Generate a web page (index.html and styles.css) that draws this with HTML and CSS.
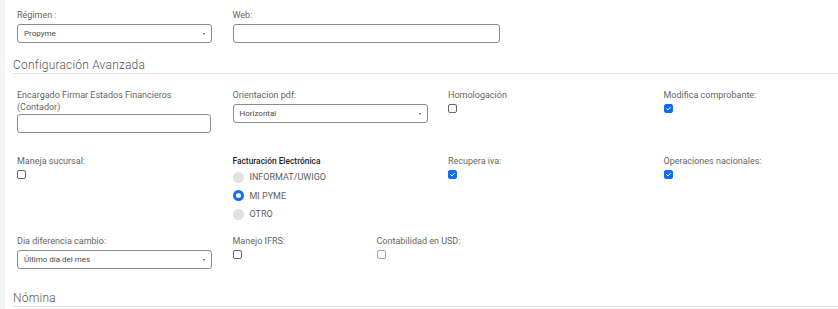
FILE: index.html
```html
<!DOCTYPE html>
<html lang="es">
<head>
    <meta charset="UTF-8">
    <meta name="viewport" content="width=device-width, initial-scale=1.0">
    <title>Configuración Empresa</title>
    <link rel="stylesheet" href="styles.css">
</head>
<body>
    <div class="content">
        <div class="row row-first">
            <div class="field">
                <label class="label">Régimen :</label>
                <div class="select">Propyme<span class="caret"></span></div>
            </div>
            <div class="field field-web">
                <label class="label">Web:</label>
                <input class="input" type="text">
            </div>
        </div>

        <div class="section-title">Configuración Avanzada</div>

        <div class="row row-2">
            <div class="field">
                <label class="label">Encargado Firmar Estados Financieros<br>(Contador)</label>
                <input class="input input-tight" type="text">
            </div>
            <div class="field">
                <label class="label">Orientacion pdf:</label>
                <div class="select">Horizontal<span class="caret"></span></div>
            </div>
            <div class="field">
                <label class="label">Homologación</label>
                <span class="check"></span>
            </div>
            <div class="field">
                <label class="label">Modifica comprobante:</label>
                <span class="check checked"><svg viewBox="0 0 10 10"><path d="M2.3 5.2 L4.2 7 L7.8 3.2" fill="none" stroke="#fff" stroke-width="1.4" stroke-linecap="round" stroke-linejoin="round"/></svg></span>
            </div>
        </div>

        <div class="row row-3">
            <div class="field">
                <label class="label">Maneja sucursal:</label>
                <span class="check"></span>
            </div>
            <div class="field">
                <div class="group-title">Facturación Electrónica</div>
                <div class="radio-item"><span class="radio"></span>INFORMAT/UWIGO</div>
                <div class="radio-item"><span class="radio selected"></span>MI PYME</div>
                <div class="radio-item"><span class="radio"></span>OTRO</div>
            </div>
            <div class="field">
                <label class="label">Recupera iva:</label>
                <span class="check checked"><svg viewBox="0 0 10 10"><path d="M2.3 5.2 L4.2 7 L7.8 3.2" fill="none" stroke="#fff" stroke-width="1.4" stroke-linecap="round" stroke-linejoin="round"/></svg></span>
            </div>
            <div class="field">
                <label class="label">Operaciones nacionales:</label>
                <span class="check checked"><svg viewBox="0 0 10 10"><path d="M2.3 5.2 L4.2 7 L7.8 3.2" fill="none" stroke="#fff" stroke-width="1.4" stroke-linecap="round" stroke-linejoin="round"/></svg></span>
            </div>
        </div>

        <div class="row row-4">
            <div class="field">
                <label class="label">Dia diferencia cambio:</label>
                <div class="select">Último día del mes<span class="caret"></span></div>
            </div>
            <div class="field">
                <label class="label">Manejo IFRS:</label>
                <span class="check"></span>
            </div>
            <div class="field">
                <label class="label">Contabilidad en USD:</label>
                <span class="check disabled"></span>
            </div>
        </div>

        <div class="section-title section-last">Nómina</div>
    </div>
</body>
</html>
```

FILE: styles.css
```css
html, body {
    height: 100%;
}
body {
    margin: 0;
    background-color: #f4f5f7;
    font-family: 'Roboto', 'Liberation Sans', sans-serif;
    color: #555;
    overflow: hidden;
}
.content {
    margin-left: 5px;
    min-height: 100%;
    background-color: #fff;
    padding: 9px 0 0 8px;
    box-sizing: border-box;
}
.row {
    display: grid;
    grid-template-columns: repeat(4, 194px);
    column-gap: 21.5px;
    padding-left: 4px;
    align-items: start;
}
.row-2 {
    margin-top: 15px;
}
.row-3 {
    margin-top: 22px;
}
.row-4 {
    margin-top: 11px;
    grid-template-columns: 194px 122.5px 194px;
}
.field {
    display: flex;
    flex-direction: column;
    align-items: flex-start;
}
.field-web {
    grid-column: span 2;
}
.field-web .input {
    width: 267px;
}
.label {
    font-size: 9px;
    line-height: 12px;
    color: #666;
    margin-bottom: 3px;
}
.input,
.select {
    width: 194px;
    height: 19px;
    box-sizing: border-box;
    border: 1px solid #8a8a8a;
    border-radius: 3px;
    background: #fff;
    font-family: inherit;
    font-size: 8px;
    color: #4a4a4a;
    padding: 0 6px;
    margin: 0;
    outline: none;
}
.input-tight {
    margin-top: -2px;
}
.select {
    position: relative;
    display: flex;
    align-items: center;
    width: 195px;
}
.caret {
    position: absolute;
    right: 6px;
    top: 8px;
    width: 0;
    height: 0;
    border-top: 2px solid #555;
    border-left: 1.5px solid transparent;
    border-right: 1.5px solid transparent;
}
.check {
    display: block;
    width: 9px;
    height: 9px;
    box-sizing: border-box;
    border: 1px solid #666;
    border-radius: 2px;
    background: #fff;
}
.check svg {
    display: block;
    width: 100%;
    height: 100%;
}
.check.checked {
    background: #0d6efd;
    border-color: #0d6efd;
}
.check.disabled {
    border-color: #a8a8a8;
}
.section-title {
    font-size: 12px;
    font-weight: 300;
    letter-spacing: 0.2px;
    line-height: 12px;
    color: #555;
    margin-top: 16px;
    padding-bottom: 2px;
    border-bottom: 1px solid #e4e4e4;
}
.section-last {
    margin-top: 23px;
}
.group-title {
    font-size: 8.4px;
    line-height: 12px;
    font-weight: 500;
    color: #1e1e1e;
    margin-bottom: 1px;
}
.radio-item {
    display: flex;
    align-items: center;
    font-size: 9px;
    line-height: 18.5px;
    color: #5e5e5e;
}
.radio {
    width: 11px;
    height: 11px;
    border-radius: 50%;
    background: #dfe1e5;
    margin-right: 6px;
    box-sizing: border-box;
}
.radio.selected {
    background: #fff;
    border: 3.5px solid #0d6efd;
}
```
